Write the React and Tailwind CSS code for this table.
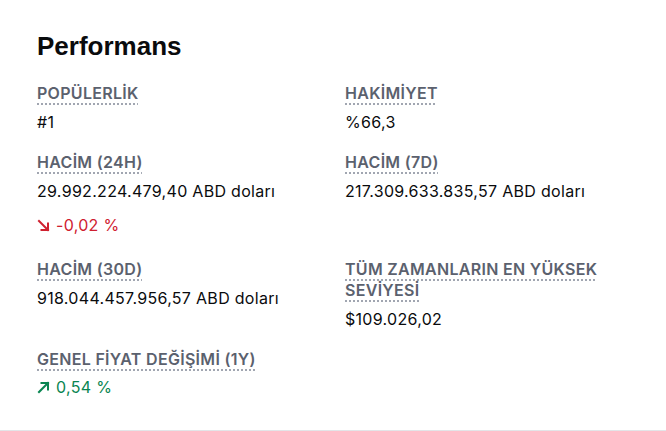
const ITEMS = [
  { label: "POPÜLERLİK", value: "#1" },
  { label: "HAKİMİYET", value: "%66,3" },
  {
    label: "HACİM (24H)",
    value: "29.992.224.479,40 ABD doları",
    change: { dir: "down", text: "-0,02 %" },
  },
  { label: "HACİM (7D)", value: "217.309.633.835,57 ABD doları" },
  { label: "HACİM (30D)", value: "918.044.457.956,57 ABD doları" },
  { label: "TÜM ZAMANLARIN EN YÜKSEK SEVİYESİ", value: "$109.026,02" },
  {
    label: "GENEL FİYAT DEĞİŞİMİ (1Y)",
    change: { dir: "up", text: "0,54 %" },
  },
];

function Arrow({ dir }) {
  const down = dir === "down";
  return (
    <svg
      width="13"
      height="13"
      viewBox="0 0 13 13"
      fill="none"
      stroke="currentColor"
      strokeWidth="2"
      strokeLinecap="square"
    >
      {down ? (
        <>
          <path d="M2 2L11 11" />
          <path d="M4.5 11H11V4.5" />
        </>
      ) : (
        <>
          <path d="M2 11L11 2" />
          <path d="M4.5 2H11V8.5" />
        </>
      )}
    </svg>
  );
}

function Stat({ item }) {
  return (
    <div className="flex flex-col">
      <span className="text-[16px] leading-[21px] font-semibold tracking-[0.3px] text-[#5b616e] underline decoration-dotted decoration-[#8a919e] underline-offset-[5px]">
        {item.label}
      </span>
      {item.value && (
        <span className="mt-[6px] text-[16px] leading-6 tracking-[0.3px] text-[#0a0b0d]">{item.value}</span>
      )}
      {item.change && (
        <span
          className={
            "flex items-center gap-[6px] text-[16px] leading-6 tracking-[0.3px] " +
            (item.change.dir === "down" ? "mt-[10px] mb-[4px] text-[#cf202f]" : "mt-[5px] text-[#098551]")
          }
        >
          <Arrow dir={item.change.dir} />
          {item.change.text}
        </span>
      )}
    </div>
  );
}

export default function App() {
  return (
    <div
      className="w-[666px] h-[431px] bg-white border-b border-[#e3e5e8] pl-[37px] pr-[24px] pt-[30px]"
      style={{ fontFamily: "Inter, 'Noto Sans', sans-serif" }}
    >
      <h2 className="text-[26px] leading-8 font-bold text-[#0a0b0d] font-['Liberation_Sans',Arial,sans-serif]">
        Performans
      </h2>
      <div className="mt-[21px] grid grid-cols-[308px_1fr] gap-y-[18px]">
        {ITEMS.map((item) => (
          <Stat key={item.label} item={item} />
        ))}
      </div>
    </div>
  );
}
